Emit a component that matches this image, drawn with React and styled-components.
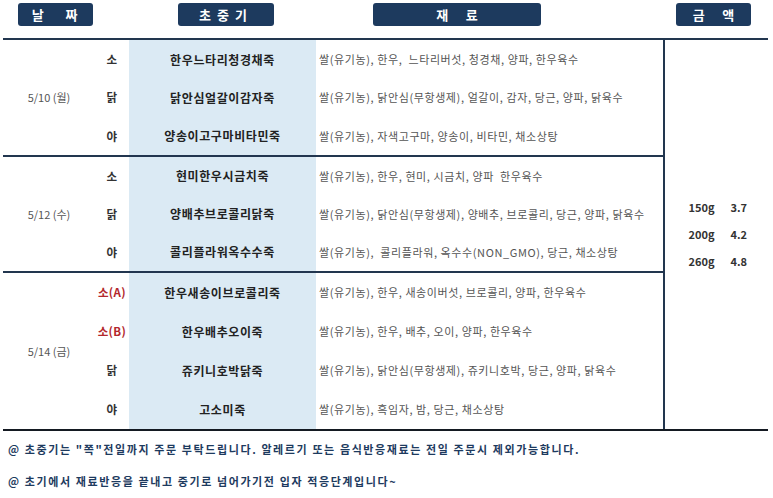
import styled, { createGlobalStyle } from 'styled-components';

const GlobalStyle = createGlobalStyle`
  body {
    margin: 0;
    background: #fff;
    font-family: "Noto Sans CJK KR", "Noto Sans", sans-serif;
  }
`;

const Page = styled.div`
  width: 765px;
  padding: 0 5px 0 3px;
`;

const HeaderBar = styled.div`
  display: flex;
  height: 38px;
  padding-top: 3px;
  box-sizing: border-box;
`;

const Pill = styled.div`
  width: ${p => p.w}px;
  margin-left: ${p => p.ml}px;
  height: 23px;
  border-radius: 3px;
  background: #1d3a5e;
  color: #fff;
  font-weight: 700;
  font-size: 13px;
  letter-spacing: ${p => p.ls || 0}px;
  display: flex;
  align-items: center;
  justify-content: center;
  white-space: pre;
`;

const Table = styled.div`
  display: flex;
  border-top: 2px solid #22364f;
  border-bottom: 2px solid #141a22;
`;

const Left = styled.div`
  width: 660px;
  border-right: 2px solid #22364f;
  display: flex;
  flex-direction: column;
`;

const Section = styled.div`
  display: grid;
  grid-template-columns: 92px 34px 187px 1fr;
  grid-auto-rows: ${p => p.rh}px;
  border-top: ${p => (p.first ? 'none' : '2px solid #22364f')};
`;

const DateCell = styled.div`
  grid-row: 1 / span ${p => p.span};
  grid-column: 1;
  display: flex;
  align-items: center;
  justify-content: center;
  font-size: 11px;
  color: #555;
`;

const Label = styled.div`
  grid-column: 2;
  display: flex;
  align-items: center;
  justify-content: center;
  font-size: 11.5px;
  font-weight: 700;
  letter-spacing: 0.4px;
  color: ${p => (p.red ? '#b3272d' : '#333')};
  white-space: nowrap;
`;

const Name = styled.div`
  grid-column: 3;
  display: flex;
  align-items: center;
  justify-content: center;
  background: #dbeaf4;
  font-size: 12px;
  font-weight: 700;
  letter-spacing: 0.6px;
  color: #222;
`;

const Ingredients = styled.div`
  grid-column: 4;
  display: flex;
  align-items: center;
  padding-left: 3px;
  font-size: 11px;
  letter-spacing: 0.6px;
  color: #555;
  white-space: pre;
`;

const PriceCol = styled.div`
  flex: 1;
  display: flex;
  flex-direction: column;
  justify-content: center;
  align-items: center;
  gap: 11px;
`;

const PriceRow = styled.div`
  display: flex;
  gap: 16px;
  font-size: 11px;
  font-weight: 700;
  color: #333;
  width: 56px;
`;

const Footer = styled.div`
  padding: 10px 0 0 5px;
  display: flex;
  flex-direction: column;
  gap: 16px;
`;

const Note = styled.div`
  font-size: 11px;
  font-weight: 700;
  letter-spacing: 1.6px;
  color: #1d3a5e;
  line-height: 16px;
  white-space: nowrap;
`;

const sections = [
  {
    date: '5/10 (월)',
    rh: 38.3,
    rows: [
      ['소', '한우느타리청경채죽', '쌀(유기농), 한우,  느타리버섯, 청경채, 양파, 한우육수'],
      ['닭', '닭안심얼갈이감자죽', '쌀(유기농), 닭안심(무항생제), 얼갈이, 감자, 당근, 양파, 닭육수'],
      ['야', '양송이고구마비타민죽', '쌀(유기농), 자색고구마, 양송이, 비타민, 채소상탕'],
    ],
  },
  {
    date: '5/12 (수)',
    rh: 38,
    rows: [
      ['소', '현미한우시금치죽', '쌀(유기농), 한우, 현미, 시금치, 양파  한우육수'],
      ['닭', '양배추브로콜리닭죽', '쌀(유기농), 닭안심(무항생제), 양배추, 브로콜리, 당근, 양파, 닭육수'],
      ['야', '콜리플라워옥수수죽', '쌀(유기농),  콜리플라워, 옥수수(NON_GMO), 당근, 채소상탕'],
    ],
  },
  {
    date: '5/14 (금)',
    rh: 39,
    rows: [
      ['소(A)', '한우새송이브로콜리죽', '쌀(유기농), 한우, 새송이버섯, 브로콜리, 양파, 한우육수', true],
      ['소(B)', '한우배추오이죽', '쌀(유기농), 한우, 배추, 오이, 양파, 한우육수', true],
      ['닭', '쥬키니호박닭죽', '쌀(유기농), 닭안심(무항생제), 쥬키니호박, 당근, 양파, 닭육수'],
      ['야', '고소미죽', '쌀(유기농), 흑임자, 밤, 당근, 채소상탕'],
    ],
  },
];

const prices = [
  ['150g', '3.7'],
  ['200g', '4.2'],
  ['260g', '4.8'],
];

function App() {
  return (
    <Page>
      <GlobalStyle />
      <HeaderBar>
        <Pill w={75} ml={15} ls={2}>{'날    짜'}</Pill>
        <Pill w={96} ml={85} ls={6}>초중기</Pill>
        <Pill w={168} ml={99}>{'재      료'}</Pill>
        <Pill w={75} ml={135}>{'금      액'}</Pill>
      </HeaderBar>
      <Table>
        <Left>
          {sections.map((section, i) => (
            <Section key={section.date} first={i === 0} rh={section.rh}>
              <DateCell span={section.rows.length}>{section.date}</DateCell>
              {section.rows.map(([label, name, ingredients, red]) => (
                <>
                  <Label red={red}>{label}</Label>
                  <Name>{name}</Name>
                  <Ingredients>{ingredients}</Ingredients>
                </>
              ))}
            </Section>
          ))}
        </Left>
        <PriceCol>
          {prices.map(([gram, price]) => (
            <PriceRow key={gram}>
              <span>{gram}</span>
              <span>{price}</span>
            </PriceRow>
          ))}
        </PriceCol>
      </Table>
      <Footer>
        <Note>@ 초중기는 "쪽"전일까지 주문 부탁드립니다. 알레르기 또는 음식반응재료는 전일 주문시 제외가능합니다.</Note>
        <Note>@ 초기에서 재료반응을 끝내고 중기로 넘어가기전 입자 적응단계입니다~</Note>
      </Footer>
    </Page>
  );
}

export default App;
